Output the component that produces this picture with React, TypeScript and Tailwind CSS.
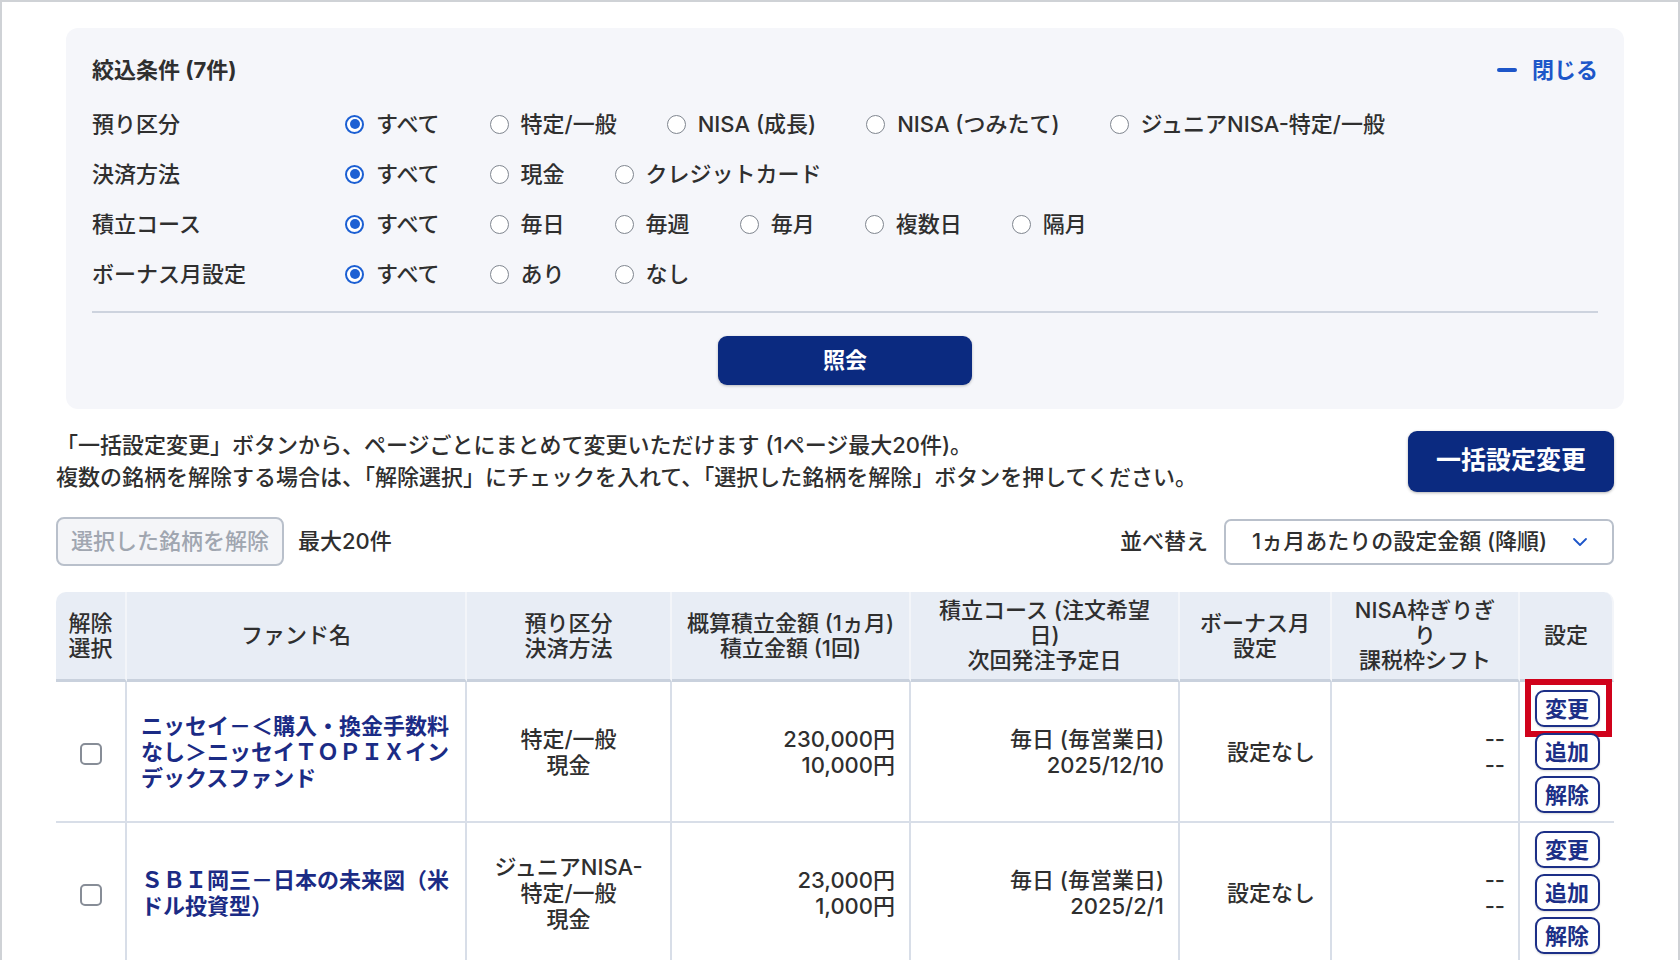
import { ChevronDown } from "lucide-react";

const filters: [string, string[]][] = [
  ["預り区分", ["すべて", "特定/一般", "NISA (成長)", "NISA (つみたて)", "ジュニアNISA-特定/一般"]],
  ["決済方法", ["すべて", "現金", "クレジットカード"]],
  ["積立コース", ["すべて", "毎日", "毎週", "毎月", "複数日", "隔月"]],
  ["ボーナス月設定", ["すべて", "あり", "なし"]],
];

const Radio = ({ checked }: { checked: boolean }) =>
  checked ? (
    <span className="flex h-[19px] w-[19px] items-center justify-center rounded-full border-2 border-[#1b5fd3] bg-white">
      <span className="h-[10px] w-[10px] rounded-full bg-[#1b5fd3]" />
    </span>
  ) : (
    <span className="h-[19px] w-[19px] rounded-full border-[1.5px] border-[#80868f] bg-white" />
  );

const RowButton = ({ label, marked }: { label: string; marked?: boolean }) => (
  <div className="relative">
    <button className="flex h-[37px] w-[65px] items-center justify-center rounded-[9px] border-2 border-[#1c2f87] bg-white text-[22px] font-bold text-[#1c2f87] shadow-[0_1px_2px_rgba(0,0,0,0.15)]">
      {label}
    </button>
    {marked && <span className="absolute -bottom-[10px] -left-[10px] -right-[12px] -top-[11px] border-[6px] border-[#d0021b]" />}
  </div>
);

const funds = [
  {
    name: "ニッセイ－＜購入・換金手数料なし＞ニッセイＴＯＰＩＸインデックスファンド",
    account: ["特定/一般", "現金"],
    amount: ["230,000円", "10,000円"],
    course: ["毎日 (毎営業日)", "2025/12/10"],
    marked: true,
  },
  {
    name: "ＳＢＩ岡三－日本の未来図（米ドル投資型）",
    account: ["ジュニアNISA-", "特定/一般", "現金"],
    amount: ["23,000円", "1,000円"],
    course: ["毎日 (毎営業日)", "2025/2/1"],
    marked: false,
  },
];

const Lines = ({ lines }: { lines: string[] }) => (
  <>
    {lines.map((l, i) => (
      <div key={i}>{l}</div>
    ))}
  </>
);

export default function App() {
  const th = "border-b-[3px] border-r-2 border-b-[#c9d1dd] border-r-[#f3f5f9] bg-[#e8edf5] px-[12px] py-[6px] text-center align-middle font-medium";
  const td = "border-b-2 border-r-2 border-[#d8dee8] align-middle";
  return (
    <div className="h-[960px] w-[1680px] overflow-hidden border-x-2 border-t-2 border-[#cfd2d6] bg-white font-[Inter,'Noto_Sans_CJK_JP',sans-serif] text-[22px] font-medium text-[#2f2f2f]">
      <div className="pl-[54px] pr-[54px] pt-[26px]">
        <section className="ml-[10px] rounded-[12px] bg-[#f5f6fa] px-[26px] pb-[24px] pt-[27px]">
          <div className="flex h-[30px] items-center justify-between">
            <h2 className="text-[22px] font-bold">絞込条件 (7件)</h2>
            <button className="flex items-center gap-[15px] font-bold text-[#1d56c9]">
              <span className="h-[4px] w-[20px] rounded-full bg-[#1d56c9]" />
              閉じる
            </button>
          </div>
          <div className="mt-[14px]">
            {filters.map(([label, opts]) => (
              <div key={label} className="flex h-[50px] items-center">
                <div className="w-[253px]">{label}</div>
                <div className="flex items-center gap-[50px]">
                  {opts.map((o, i) => (
                    <label key={o} className="flex items-center gap-[12px]">
                      <Radio checked={i === 0} />
                      <span>{o}</span>
                    </label>
                  ))}
                </div>
              </div>
            ))}
          </div>
          <div className="mt-[12px] h-[2px] bg-[#cdd3de]" />
          <button className="mx-auto mt-[23px] flex h-[49px] w-[254px] items-center justify-center rounded-[9px] bg-[#0b2a80] font-bold text-white shadow-[0_1px_3px_rgba(0,0,0,0.25)]">
            照会
          </button>
        </section>

        <div className="mr-[10px] mt-[20px] flex items-center justify-between">
          <div className="leading-[32px]">
            <p>「一括設定変更」ボタンから、ページごとにまとめて変更いただけます (1ページ最大20件)。</p>
            <p>複数の銘柄を解除する場合は、「解除選択」にチェックを入れて、「選択した銘柄を解除」ボタンを押してください。</p>
          </div>
          <button className="flex h-[61px] w-[206px] items-center justify-center rounded-[9px] bg-[#0b2a80] text-[25px] font-bold text-white shadow-[0_1px_3px_rgba(0,0,0,0.3)]">
            一括設定変更
          </button>
        </div>

        <div className="mr-[10px] mt-[24px] flex items-center justify-between">
          <div className="flex items-center gap-[14px]">
            <button className="flex h-[49px] w-[228px] items-center justify-center rounded-[8px] border-2 border-[#b9c0cb] bg-[#f4f5f8] text-[#a0a6b0]">
              選択した銘柄を解除
            </button>
            <span>最大20件</span>
          </div>
          <div className="flex items-center gap-[16px]">
            <span>並べ替え</span>
            <div className="flex h-[46px] w-[390px] items-center justify-between rounded-[7px] border-2 border-[#b9c0cb] bg-white pl-[26px] pr-[20px]">
              <span>1ヵ月あたりの設定金額 (降順)</span>
              <ChevronDown className="h-[24px] w-[24px] text-[#1d56c9]" strokeWidth={1.8} />
            </div>
          </div>
        </div>

        <table className="mr-[10px] mt-[26px] w-[1558px] table-fixed border-separate border-spacing-0 leading-[25px]">
          <colgroup>
            <col className="w-[71px]" />
            <col className="w-[340px]" />
            <col className="w-[205px]" />
            <col className="w-[239px]" />
            <col className="w-[269px]" />
            <col className="w-[152px]" />
            <col className="w-[188px]" />
            <col className="w-[94px]" />
          </colgroup>
          <thead>
            <tr className="h-[89px]">
              <th className={`${th} rounded-tl-[10px] px-[6px]`}>解除選択</th>
              <th className={th}>ファンド名</th>
              <th className={th}>
                預り区分
                <br />
                決済方法
              </th>
              <th className={th}>
                概算積立金額 (1ヵ月)
                <br />
                積立金額 (1回)
              </th>
              <th className={`${th} px-[14px]`}>
                積立コース (注文希望日)
                <br />
                次回発注予定日
              </th>
              <th className={`${th} px-[14px]`}>ボーナス月設定</th>
              <th className={`${th} px-[16px]`}>
                NISA枠ぎりぎり
                <br />
                課税枠シフト
              </th>
              <th className={`${th} rounded-tr-[10px] border-r-0`}>設定</th>
            </tr>
          </thead>
          <tbody className="leading-[26px]">
            {funds.map((f) => (
              <tr key={f.name}>
                <td className={`${td} text-center`}>
                  <span className="inline-block h-[22px] w-[22px] rounded-[5px] border-2 border-[#878d97] bg-white align-middle" />
                </td>
                <td className={`${td} px-[14px] font-bold text-[#1b2b85]`}>{f.name}</td>
                <td className={`${td} text-center`}>
                  <Lines lines={f.account} />
                </td>
                <td className={`${td} pr-[14px] text-right`}>
                  <Lines lines={f.amount} />
                </td>
                <td className={`${td} pr-[14px] text-right`}>
                  <Lines lines={f.course} />
                </td>
                <td className={`${td} pr-[15px] text-right`}>設定なし</td>
                <td className={`${td} pr-[13px] text-right`}>
                  <Lines lines={["--", "--"]} />
                </td>
                <td className="border-b-2 border-[#d8dee8] py-[8px] align-middle">
                  <div className="flex flex-col items-center gap-[6px]">
                    <RowButton label="変更" marked={f.marked} />
                    <RowButton label="追加" />
                    <RowButton label="解除" />
                  </div>
                </td>
              </tr>
            ))}
          </tbody>
        </table>
      </div>
    </div>
  );
}
